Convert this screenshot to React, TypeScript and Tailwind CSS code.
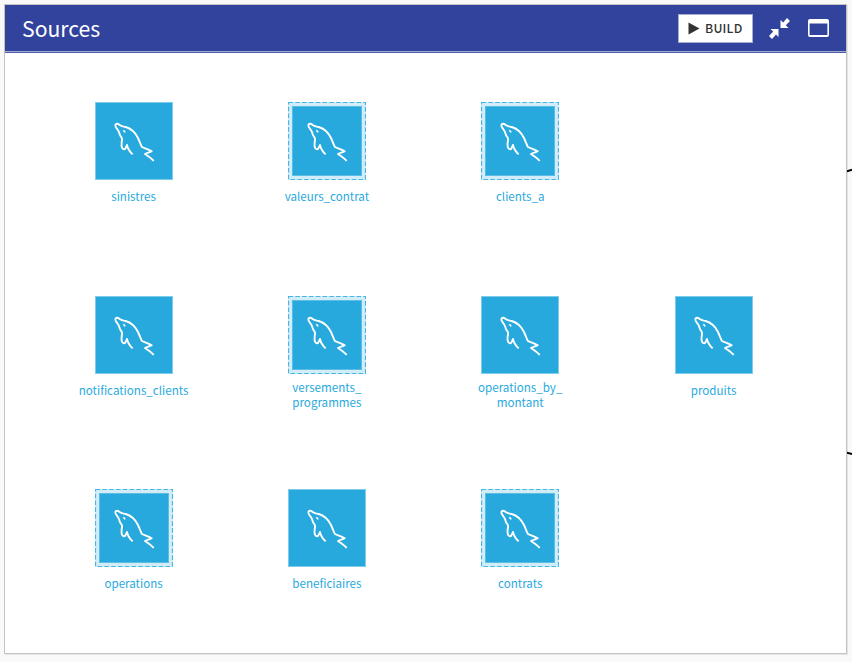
type Source = { name: string; lines?: string[]; shared?: boolean } | null;

const sources: Source[] = [
  { name: 'sinistres' },
  { name: 'valeurs_contrat', shared: true },
  { name: 'clients_a', shared: true },
  null,
  { name: 'notifications_clients' },
  { name: 'versements_programmes', lines: ['versements_', 'programmes'], shared: true },
  { name: 'operations_by_montant', lines: ['operations_by_', 'montant'] },
  { name: 'produits' },
  { name: 'operations', shared: true },
  { name: 'beneficiaires' },
  { name: 'contrats', shared: true },
];

function Dolphin() {
  return (
    <svg viewBox="0 0 168 168" className="size-14 shrink-0" fill="none" stroke="white" strokeWidth="5.6" strokeLinejoin="round">
      <path d="M80 124C71 116 65 107 63 96C60 102 59 109 54 109C48 108 46 97 47 88C49 81 49 75 45 71C40 66 41 59 37 53C33 47 27 42 28 36C30 30 37 32 41 36C47 41 51 40 59 42C77 47 89 61 96 75C101 86 103 93 107 101C113 106 125 106 137 115C131 119 124 119 117 123C126 129 136 135 143 144" />
      <path d="M51 52C55 50 60 54 57 59L53 56Z" fill="white" strokeWidth="1" />
    </svg>
  );
}

function Tile({ source }: { source: Source }) {
  if (!source) return <div />;
  return (
    <div className="flex flex-col items-center">
      {source.shared ? (
        <div className="relative size-[78px] shrink-0 bg-[#d3edf8] p-1">
          <svg className="absolute inset-0 size-[78px]" fill="none">
            <rect x="0.5" y="0.5" width="77" height="77" stroke="#48b6e2" strokeWidth="1.2" strokeDasharray="4.6 2.2" />
          </svg>
          <div className="flex size-[70px] items-center justify-center border border-[#5bbde5] bg-[#28a9dd]">
            <Dolphin />
          </div>
        </div>
      ) : (
        <div className="flex size-[78px] shrink-0 items-center justify-center border border-[#7fcbea] bg-[#28a9dd]">
          <Dolphin />
        </div>
      )}
      <div className={`text-center text-[11.6px] leading-[15px] whitespace-nowrap text-[#28a9dd] ${source.lines ? 'mt-[6px]' : 'mt-[9px]'}`}>
        {source.lines
          ? source.lines.map((line, i) => (
              <span key={line}>
                {i > 0 && <br />}
                {line}
              </span>
            ))
          : source.name}
      </div>
    </div>
  );
}

export default function App() {
  return (
    <div className="relative h-[662px] w-[852px] overflow-hidden bg-[#f9f9f9] pt-1 pl-1 font-['Noto_Sans_CJK_SC',sans-serif]">
      <main className="flex h-[650px] w-[843px] flex-col border border-[#c4c4c4] bg-white shadow-[1px_1px_0_#e4e4e4]">
        <header className="flex h-[48px] shrink-0 items-center border-b border-[#4d5cab] bg-[#31439c] pr-[17px] pl-[17px] shadow-[inset_0_-1px_0_#a3abd2]">
          <h1 className="flex-1 pb-[1px] text-[21.2px] leading-[30px] text-white">Sources</h1>
          <button className="flex h-[29px] w-[75px] items-center border border-[#a5acd0] bg-white pl-[9px] text-[#333]">
            <svg width="12" height="13" viewBox="0 0 12 13" fill="#333">
              <path d="M0.5 0.5L11.5 6.5L0.5 12.5Z" />
            </svg>
            <span className="ml-[5px] pb-[2px] text-[12.3px] leading-[18px] font-medium tracking-[0.2px]">BUILD</span>
          </button>
          <svg className="ml-[16px]" width="21" height="21" viewBox="0 0 21 21" fill="white">
            <path d="M11.5 2V10H19.5L16.8 7.2L21 3L18 0L14.2 4.5ZM9.5 19V11H1.5L4.2 13.5L0 18L3 21L7 16.5Z" />
          </svg>
          <svg className="ml-[18px]" width="21" height="19" viewBox="0 0 21 19" fill="none">
            <path fill="white" fillRule="evenodd" d="M2 0H19Q21 0 21 2V16Q21 18 19 18H2Q0 18 0 16V2Q0 0 2 0ZM1.6 4.5V16H19.4V4.5Z" />
          </svg>
        </header>
        <section className="grid grid-cols-[repeat(4,193.33px)] grid-rows-[repeat(3,193.33px)] pt-[49.3px] pl-[31.9px]">
          {sources.map((source, i) => (
            <Tile key={i} source={source} />
          ))}
        </section>
      </main>
      <svg className="absolute top-[164px] left-[847px]" width="5" height="10">
        <path d="M0 7.4L5 5.8" stroke="black" strokeWidth="2" />
      </svg>
      <svg className="absolute top-[448px] left-[847px]" width="5" height="10">
        <path d="M0 4.7L5 6" stroke="black" strokeWidth="2" />
      </svg>
    </div>
  );
}
